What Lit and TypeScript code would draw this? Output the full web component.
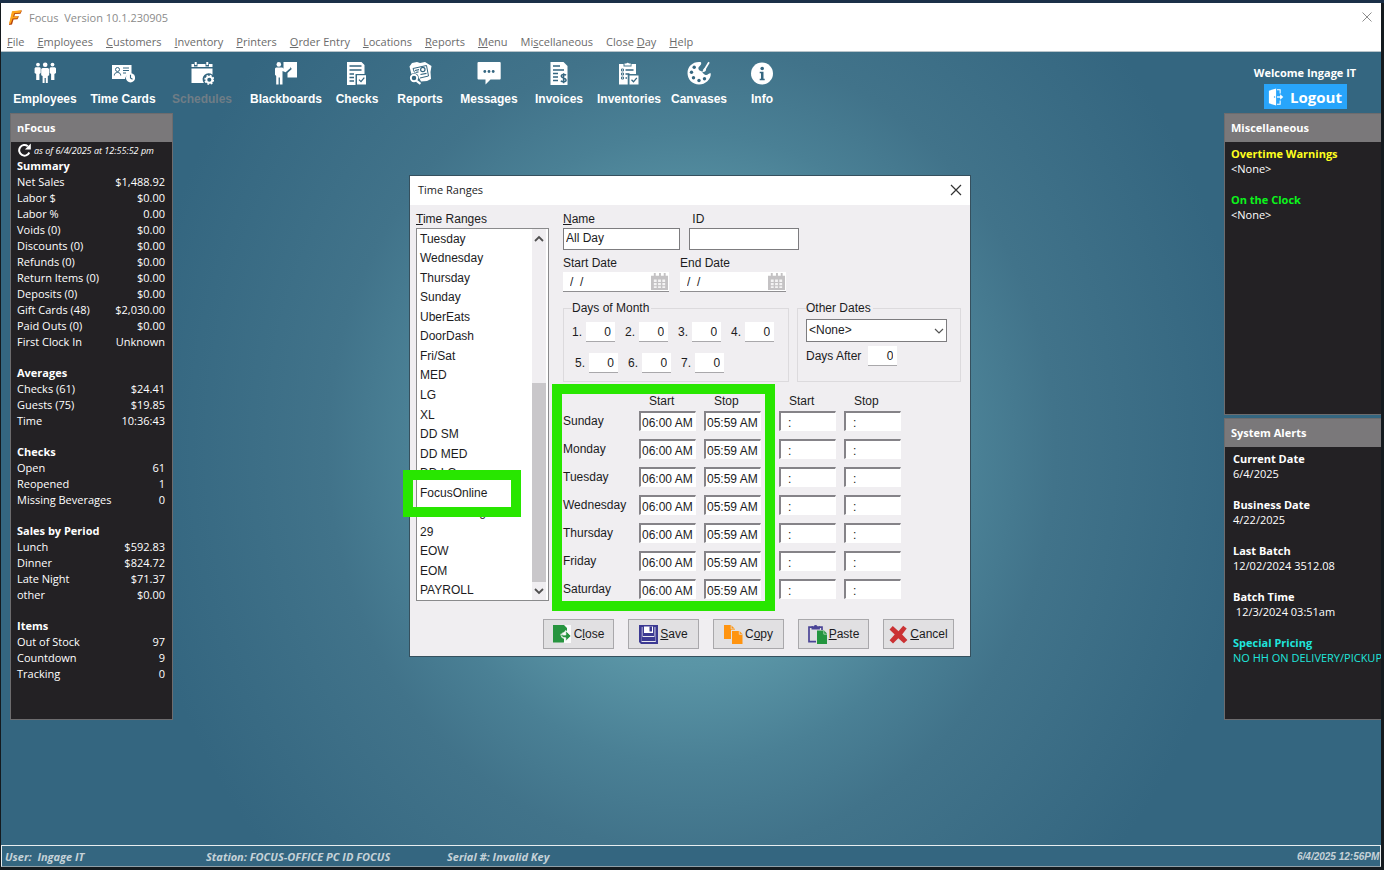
import { LitElement, html, css, svg, nothing } from "lit";
import type { TemplateResult, SVGTemplateResult } from "lit";
import { customElement } from "lit/decorators.js";
import { classMap } from "lit/directives/class-map.js";

/** Menu captions; "&" precedes the access key. */
const MENUS = [
  "&File", "&Employees", "&Customers", "&Inventory", "&Printers", "&Order Entry",
  "&Locations", "&Reports", "&Menu", "Mi&scellaneous", "Close &Day", "&Help",
];

const accessKey = (caption: string): TemplateResult => {
  const i = caption.indexOf("&");
  if (i < 0) return html`${caption}`;
  return html`${caption.slice(0, i)}<u>${caption[i + 1]}</u>${caption.slice(i + 2)}`;
};

const icon = (body: SVGTemplateResult, size = 24, box = 24): TemplateResult =>
  html`<svg width=${size} height=${size} viewBox="0 0 ${box} ${box}" aria-hidden="true">${body}</svg>`;

const BG = "#346680";

const TOOLS: { name: string; disabled?: boolean; art: SVGTemplateResult }[] = [
  {
    name: "Employees",
    art: svg`<g fill="#fff"><circle cx="5" cy="3.6" r="1.9"/><circle cx="19.500" cy="3.600" r="1.900"/><circle cx="12.200" cy="3.800" r="2.300"/>
      <path d="M2.500 6.300h4.200l1 .8V12l-1.300 1v6H3.200v-6L1.600 12V7.200zM17.700 6.300h4.200l1.100.9V12l-1.600 1v6h-3.300v-6L16.700 12V7.100z"/>
      <path d="M9.500 7h5.400l1.300 1.100v6.100L14.800 15v7h-2v-5h-1.200v5h-2v-7l-1.400-.8V8.100z"/></g>`,
  },
  {
    name: "Time Cards",
    art: svg`<path fill="#fff" d="M1 4h19.500v9.500a5 5 0 0 0-6.500 4.500H1z"/><circle cx="19.500" cy="16.800" r="4.600" fill="#fff"/>
      <path d="M19.500 13.800v3.200l2 1.200" fill="none" stroke=${BG} stroke-width="1.100"/>
      <circle cx="6.500" cy="8.500" r="2" fill="none" stroke=${BG}/><path d="M3.300 14.500c0-2 1.200-3 3.200-3s3.200 1 3.200 3M12 7h6M12 9.500h6M12 12h3" fill="none" stroke=${BG}/>`,
  },
  {
    name: "Schedules",
    disabled: true,
    art: svg`<path fill="#fff" d="M1.500 3H4v2.500h3.500V3h8v2.500H19V3h3.500v3h-21zM1.500 7.500h21v6.200a6 6 0 0 0-8.600 8.300H1.500z"/>
      <path d="M5.700 1v3M17.300 1v3" stroke="#fff" stroke-width="2"/>
      <circle cx="19.300" cy="18.800" r="3" fill="none" stroke="#fff" stroke-width="1.900"/><circle cx="19.300" cy="18.800" r="4.300" fill="none" stroke="#fff" stroke-width="1.500" stroke-dasharray="1.700 1.680"/>`,
  },
  {
    name: "Blackboards",
    art: svg`<path fill="#fff" d="M9.500 1H23v15.500h-9.500V12l4.300-4-1.200-1.700-5 3.400H9.500z"/><circle cx="4.800" cy="3.400" r="2.300" fill="#fff"/>
      <path d="M2 6.600h6.200L11.500 8.800l4-3 1 1.300-4.900 4.200L8.500 10v13.500H5.900v-7H4.600v7H2.200V15L1 13.700V7.600z" fill="#fff"/>`,
  },
  {
    name: "Checks",
    art: svg`<path fill="#fff" d="M2 1h14.500L19.500 4v9H10.500v11H2z"/><path fill="#fff" d="M12 14.200h9v9.300h-9z"/>
      <path d="M4.500 5h12M4.500 9h12M4.500 13h4.500M4.500 16.500h4.500M4.500 20h4.500" stroke=${BG} stroke-width="1.500"/><path d="M14 18.600l2 2 3.300-4" fill="none" stroke=${BG} stroke-width="1.300"/>`,
  },
  {
    name: "Reports",
    art: svg`<path fill="#fff" d="M1.500 5.500 4 2l5-1 3 1 5-1L23.500 5l-1 6 .5 7-4 2-6 .5-1.500-3-7.500-2z"/><path fill="none" stroke=${BG} d="M5 7.500 18.500 4.500l2 10.500-8.500 2M5 7.500l1.500 4"/>
      <path d="M7 9.500l4-.8M7.500 11.500l3-.6M12.500 13.500l6-1.200" stroke=${BG} stroke-width="1.200"/><circle cx="14.800" cy="8.500" r="2.200" fill="none" stroke=${BG} stroke-width="1.200"/>
      <circle cx="6" cy="17" r="4.800" fill=${BG}/><circle cx="6" cy="17" r="3.200" fill="none" stroke="#fff" stroke-width="1.900"/><path d="M8.500 19.800l4 3" stroke="#fff" stroke-width="2.200"/>`,
  },
  {
    name: "Messages",
    art: svg`<path fill="#fff" d="M1.500 1h21A1 1 0 0 1 23.700 2v15.500a1 1 0 0 1-1.200 1H13.500L8.500 23.500v-5h-7a1 1 0 0 1-1-1V2a1 1 0 0 1 1-1z"/>
      <g fill=${BG}><circle cx="7.800" cy="10.500" r="1.400"/><circle cx="12" cy="10.500" r="1.400"/><circle cx="16.200" cy="10.500" r="1.400"/></g>`,
  },
  {
    name: "Invoices",
    art: svg`<path fill="#fff" d="M3.500 1h13l4 4v19h-17z"/><path d="M6 5h7M6 9h11M6 12.500h5M6 16h5M6 19.500h5" stroke=${BG} stroke-width="1.600"/>
      <path d="M19 14.300c-1-1.200-4.800-1.200-4.800.8 0 2.300 4.900 1.500 4.900 4 0 2.200-4 2.200-5.200.7M16.600 12.200v10" fill="none" stroke=${BG} stroke-width="1.500"/>`,
  },
  {
    name: "Inventories",
    art: svg`<path fill="#fff" d="M2 3h4.500v2.500h8V3H19v10h-8.300v10.500H2z"/><path fill="#fff" d="M7.500 2.500h1.800a1.500 1.500 0 0 1 2.700 0h1.700v2H7.500z"/><path fill="#fff" d="M12.500 14.500h9v9h-9z"/>
      <path d="M8.500 9h8M8.500 13h4M8.500 17h1.500" stroke=${BG} stroke-width="1.400"/><path d="M4.500 8h2v2h-2zM4.500 12h2v2h-2zM4.500 16h2v2h-2z" fill="none" stroke=${BG} stroke-width=".9"/><path d="M14.500 18.800l2 2 3.300-4" fill="none" stroke=${BG} stroke-width="1.300"/>`,
  },
  {
    name: "Canvases",
    art: svg`<path fill="#fff" d="M14 1.200C6 .2.500 5.500.500 12c0 6.500 5 11.500 11.500 11.500S24 18.500 23.800 12.500c-1.600-1-2.800 2-5.300 1.400-2.600-.6-2.700-3.300-4.700-3.900-2-.6-2.800-2.200-2.300-3.600.6-1.600 3.500-2.200 2.500-5.200z"/>
      <g fill=${BG}><circle cx="7.200" cy="6.200" r="1.700"/><circle cx="4.500" cy="11.300" r="1.700"/><circle cx="6.500" cy="16.700" r="1.700"/><circle cx="12" cy="19.500" r="1.700"/><circle cx="17.500" cy="17.800" r="1.700"/></g>
      <path d="M22 1.300l-4.800 8" stroke="#fff" stroke-width="1.700"/><path d="M17.800 7.200c-1.800 0-1.200 2.600-2.800 3.600 2 .8 4.300-.4 4-2.800z" fill="#fff"/>`,
  },
  {
    name: "Info",
    art: svg`<circle cx="12" cy="12.500" r="11" fill="#fff"/><circle cx="12.200" cy="7.500" r="1.800" fill=${BG}/><path d="M9.700 10.800h3.800v7h1.200v1.500h-5v-1.500h1.300v-5.500H9.700z" fill=${BG}/>`,
  },
];

const SUMMARY: { title: string; rows: [string, string][] }[] = [
  {
    title: "Summary",
    rows: [
      ["Net Sales", "$1,488.92"], ["Labor $", "$0.00"], ["Labor %", "0.00"], ["Voids (0)", "$0.00"],
      ["Discounts (0)", "$0.00"], ["Refunds (0)", "$0.00"], ["Return Items (0)", "$0.00"], ["Deposits (0)", "$0.00"],
      ["Gift Cards (48)", "$2,030.00"], ["Paid Outs (0)", "$0.00"], ["First Clock In", "Unknown"],
    ],
  },
  { title: "Averages", rows: [["Checks (61)", "$24.41"], ["Guests (75)", "$19.85"], ["Time", "10:36:43"]] },
  { title: "Checks", rows: [["Open", "61"], ["Reopened", "1"], ["Missing Beverages", "0"]] },
  { title: "Sales by Period", rows: [["Lunch", "$592.83"], ["Dinner", "$824.72"], ["Late Night", "$71.37"], ["other", "$0.00"]] },
  { title: "Items", rows: [["Out of Stock", "97"], ["Countdown", "9"], ["Tracking", "0"]] },
];

const ALERTS = [
  { title: "Current Date", value: "6/4/2025" },
  { title: "Business Date", value: "4/22/2025" },
  { title: "Last Batch", value: "12/02/2024 3512.08" },
  { title: "Batch Time", value: "\u00a012/3/2024 03:51am" },
  { title: "Special Pricing", value: "NO HH ON DELIVERY/PICKUP", tone: "cyan" },
];

const RANGES = [
  "Tuesday", "Wednesday", "Thursday", "Sunday", "UberEats", "DoorDash", "Fri/Sat", "MED", "LG", "XL",
  "DD SM", "DD MED", "DD LG", "FocusOnline", "DD Catering", "29", "EOW", "EOM", "PAYROLL",
];

const DAYS = ["Sunday", "Monday", "Tuesday", "Wednesday", "Thursday", "Friday", "Saturday"];

const ACTIONS: { caption: string; art: SVGTemplateResult }[] = [
  {
    caption: "C&lose",
    art: svg`<path fill="#fafafa" d="M10 0h8v18h-8z"/><path fill="#27943f" d="M0 0h11l3 3v3l-1.500-.8-1.500 2c-4 0-4.300 6 0 6.500v3.800H0z"/><path fill="#27943f" stroke="#fafafa" stroke-width=".7" d="M12.800 5.800 18 11l-5.200 5v-3.200c-3 .2-5-1.600-5-3.800 1.200 1 3 1.300 5 1z"/>`,
  },
  {
    caption: "&Save",
    art: svg`<path fill="#3c3a93" d="M0 0h19v19H2L0 17z"/><path fill="#e8e8f0" d="M2.500 2H4v9h11V2h1.800v15H2.500z"/><path fill="#fff" d="M5 1.500h9v6.500H5z"/><path fill="#3c3a93" d="M10.500 1.500H13v5h-2.500zM3.500 2v10h12V2h1v14h-14V2z"/>`,
  },
  {
    caption: "C&opy",
    art: svg`<path fill="#ff9410" d="M0 0h7l4 4v1H7v9H0zM8 6h7.500L18.500 9v10H8z"/><path d="M7.200 0v4H11M15.300 6v3.300h3.200" stroke="#e1e0e1" fill="none" stroke-width=".8"/>`,
  },
  {
    caption: "&Paste",
    art: svg`<path fill="none" stroke="#4a4496" stroke-width="1.700" d="M5 2.200H1v14.500h7M11 2.200h3V5"/><path fill="#4a4496" d="M3.500 1.200h2.300a2 2 0 0 1 3.600 0h2.500v3.200H3.500z"/><path fill="#24963f" d="M9 5.500h7L19.500 9v10H9z"/><path d="M15.800 5.500V9.200h3.700" stroke="#b8dcc0" fill="none" stroke-width=".8"/>`,
  },
  {
    caption: "&Cancel",
    art: svg`<path fill="#cb3234" d="M3.800 1 9.500 6.200 14.200.8l3.500 2.600-4.600 6 5.300 5.700-3.500 3.200-5.600-5L4 18.500.6 15.300l5.100-5.800L.5 4.500z"/>`,
  },
];

const calendar = icon(
  svg`<path fill="#c4c2c4" d="M0 3h3V0h2v3h3.500V0h2v3h3V0h2v3H18v15H0z"/>
    <path fill="#f4f3f4" d="M3 7h3v2.500H3zM7.500 7h3v2.500h-3zM12 7h3v2.500h-3zM3 10.500h3V13H3zM7.500 10.500h3V13h-3zM12 10.500h3V13h-3zM3 14h3v2H3zM7.500 14h3v2h-3zM12 14h3v2h-3z"/>`,
  17, 18,
);

@customElement("app-root")
export class AppRoot extends LitElement {
  static styles = css`
    :host {
      display: flex;
      flex-direction: column;
      min-height: 100vh;
      box-sizing: border-box;
      padding: 3px 3px 3px 1px;
      background: linear-gradient(#1b3048 0 3px, #141a1e 3px);
      font-family: "Open Sans", "Noto Sans", sans-serif;
      font-size: 11px;
      color: #fff;
      overflow: hidden;
    }
    * { box-sizing: border-box; }
    svg { display: block; flex: none; }
    button, input, select { font: inherit; color: inherit; margin: 0; padding: 0; border: 0; background: none; border-radius: 0; }
    ul { list-style: none; margin: 0; padding: 0; }

    .titlebar { display: flex; align-items: center; height: 28px; padding: 0 8px 0 7px; gap: 6px; background: #fff; color: #8b8b8b; font-size: 11px; }
    .titlebar .caption { flex: 1; white-space: pre; }
    .menubar { display: flex; height: 21px; padding: 0 6px; gap: 13px; align-items: center; background: #fff; color: #6b6b6b; border-bottom: 1px solid #b8c4ca; white-space: nowrap; }

    .desktop {
      flex: 1;
      display: flex;
      flex-direction: column;
      position: relative;
      background: radial-gradient(ellipse 560px 620px at 50% 50%, #6aabb9 0%, #5a95a6 35%, #4a8095 51%, #41738a 65%, #346680 100%);
    }
    .toolbar { display: flex; justify-content: space-between; height: 61px; padding-left: 5px; }
    .tools { display: grid; grid-template-columns: 78px 78px 80px 88px 54px 72px 66px 74px 66px 74px 52px; }
    .tool { display: flex; flex-direction: column; align-items: center; gap: 7px; padding-top: 9px; font: bold 12px/14px "Liberation Sans", sans-serif; white-space: nowrap; }
    .tool.off { color: #6f7d86; }
    .session { display: flex; flex-direction: column; align-items: center; gap: 3px; width: 152px; padding-top: 13px; font-weight: bold; line-height: 16px; }
    .logout { display: flex; align-items: center; justify-content: center; gap: 4px; width: 83px; height: 25px; background: #28a5fb; font-size: 15px; font-weight: bold; }

    .columns { display: flex; justify-content: space-between; align-items: stretch; padding-left: 9px; }
    .panel { border: 1px solid #6d6c6e; background: #232124; min-width: 0; overflow: hidden; }
    .panel h2 { margin: 0; padding: 0 6px; height: 28px; line-height: 28px; font-size: 11px; background: #7a787a; }
    .nfocus { width: 163px; }
    .nfocus .body { padding: 0 7px 37px 6px; }
    .stamp { display: flex; align-items: center; gap: 3px; height: 16px; font-size: 9px; font-style: italic; white-space: nowrap; }
    .groups { display: flex; flex-direction: column; gap: 15px; line-height: 16px; }
    .group h3 { margin: 0; font-size: 11px; line-height: 16px; }
    .line { display: flex; justify-content: space-between; white-space: nowrap; }
    .side { display: grid; grid-template-rows: 1fr 1fr; gap: 3px; width: 157px; }
    .side .panel { border-right: 0; }
    .notes { display: flex; flex-direction: column; gap: 16px; padding: 4px 6px; line-height: 15px; white-space: nowrap; }
    .notes.inset { padding-left: 8px; }
    .notes h3 { margin: 0; font-size: 11px; line-height: 15px; }
    .yellow { color: #ffff1e; }
    .green { color: #0cf41c; }
    .cyan { color: #1fe5dd; }

    .statusbar { display: flex; height: 22px; align-items: center; border: 1px solid #e8eef0; border-bottom-color: #8fa0a8; background: #346680; color: #c5d2d8; font-size: 11px; font-weight: bold; font-style: italic; white-space: pre; overflow: hidden; }
    .statusbar .user { width: 204px; padding-left: 3px; }
    .statusbar .station { width: 241px; }
    .statusbar .serial { flex: 1; }
    .statusbar .clock { width: 83px; font-family: "Liberation Sans", sans-serif; font-size: 10px; }

    .dialog { position: absolute; left: 50%; top: 123px; width: 562px; margin-left: -282px; border: 1px solid #35505e; background: #f0eef1; color: #1c1c1e; font: 12px/14px "Liberation Sans", Arial, sans-serif; }
    .dialog header { display: flex; align-items: center; justify-content: space-between; height: 29px; padding: 0 8px 2px; background: #fff; font: 11px/16px "Open Sans", sans-serif; }
    .dialog .main { display: grid; grid-template-columns: 133px 1fr; gap: 14px; padding: 7px 9px 0 6px; }
    .ranges { display: flex; flex-direction: column; gap: 2px; }
    .listbox { flex: 1; display: grid; grid-template-columns: 1fr 14px; border: 1px solid #8a8a8c; background: #fff; }
    .list { display: flex; flex-direction: column; padding-left: 3px; }
    .list li { flex: 1; display: flex; align-items: center; position: relative; }
    .mark { position: absolute; border: 10px solid #28e600; pointer-events: none; z-index: 2; }
    .mark.row { left: -17px; top: -13px; width: 118px; height: 47px; }
    .mark.hours { left: -11px; top: 2px; width: 223px; height: 227px; }
    .listbox { padding-right: 2px; }
    .scroll { display: grid; grid-template-rows: 19px 135px 1fr 18px; background: #f0eef1; }
    .scroll button { display: flex; align-items: center; justify-content: center; }
    .thumb { grid-row: 3; background: #c9c7ca; }
    .scroll .down { grid-row: 4; }

    .form { display: flex; flex-direction: column; }
    .pair { display: flex; }
    .field { display: flex; flex-direction: column; gap: 2px; }
    .text { height: 22px; padding: 0 2px 2px; border: 1px solid #7d7c7f; background: #fff; }
    .name { width: 117px; }
    .ident { width: 110px; }
    .gap9 { gap: 9px; }
    .dates { gap: 11px; padding-top: 6px; }
    .date { display: flex; align-items: center; width: 106px; height: 20px; padding-right: 1px; background: #fff; border-bottom: 1px solid #8f8e91; }
    .date input { flex: 1; min-width: 0; padding-left: 7px; }
    .boxes { display: flex; gap: 8px; padding-top: 9px; }
    fieldset { position: relative; margin: 0; min-width: 0; height: 81px; padding: 0 8px; border: 1px solid #dcdadd; }
    legend { padding: 0 2px 0 0; margin-left: 0; line-height: 14px; }
    .month { width: 226px; }
    .other { width: 164px; }
    .slots { display: flex; gap: 10px; padding-top: 7px; }
    .slots + .slots { padding: 11px 0 0 3px; }
    .slot { display: flex; align-items: center; gap: 4px; }
    .num { width: 29px; height: 20px; padding-right: 4px; background: #fff; border-bottom: 1px solid #a9a8ab; text-align: right; }
    .drop { position: relative; display: flex; }
    .drop select { width: 141px; height: 23px; padding: 0 0 2px 2px; border: 1px solid #7d7c7f; background: #fff; appearance: none; }
    .drop svg { position: absolute; right: 8px; top: 11px; pointer-events: none; }
    .other .drop { padding-top: 4px; }
    .after { display: flex; align-items: center; gap: 7px; padding-top: 4px; }

    .hours-wrap { position: relative; padding-top: 12px; }
    .table { border-collapse: collapse; table-layout: fixed; width: 338px; }
    .table th { padding: 0; font-weight: normal; text-align: left; vertical-align: top; }
    .table thead th { height: 17px; padding-left: 10px; }
    .table tbody th { padding-top: 3px; }
    .table td { padding: 0; vertical-align: top; }
    .table tbody td { height: 28px; }
    .table tbody tr:last-child td { height: 22px; }
    .table .day { width: 76px; }
    .table .near { width: 65px; }
    .table .far { width: 75px; }
    .table .last { width: 57px; }
    .table input { display: block; width: 57px; height: 20px; padding: 2px 0 0 1px; background: #fff; border: 1px solid #fff; border-top: 2px solid #858388; border-left: 2px solid #858388; }
    .table input.blank { padding-left: 7px; }
    .actions { display: flex; justify-content: flex-end; gap: 14px; padding: 18px 16px 7px; }
    .actions button { display: flex; align-items: center; justify-content: center; gap: 2px; width: 71px; height: 30px; border: 1px solid #a9a8ab; background: #e1e0e2; }
  `;

  private entry(label: string, value: string, blank = false) {
    return html`<input class=${blank ? "blank" : ""} type="text" aria-label=${label} .value=${value} />`;
  }

  private monthDay(n: number) {
    return html`<label class="slot">${n}.<input class="num" type="text" .value=${"0"} /></label>`;
  }

  private dialog() {
    return html`<section class="dialog" role="dialog" aria-label="Time Ranges">
      <header>
        <span>Time Ranges</span>
        <button aria-label="Close window">${icon(svg`<path d="M1 1l10 10M11 1 1 11" stroke="#333" stroke-width="1.200"/>`, 12, 12)}</button>
      </header>
      <div class="main">
        <div class="ranges">
          <span id="ranges">${accessKey("&Time Ranges")}</span>
          <div class="listbox">
            <ul class="list" role="listbox" aria-labelledby="ranges">
              ${RANGES.map((r) => html`<li role="option">${r}${r === "FocusOnline" ? html`<span class="mark row"></span>` : nothing}</li>`)}
            </ul>
            <div class="scroll">
              <button aria-label="Scroll up">${icon(svg`<path d="M1 7l4-4 4 4" fill="none" stroke="#505050" stroke-width="1.800"/>`, 10, 10)}</button>
              <div class="thumb"></div>
              <button class="down" aria-label="Scroll down">${icon(svg`<path d="M1 3l4 4 4-4" fill="none" stroke="#505050" stroke-width="1.800"/>`, 10, 10)}</button>
            </div>
          </div>
        </div>
        <div class="form">
          <div class="pair gap9">
            <div class="field"><label for="name">${accessKey("&Name")}</label><input id="name" class="text name" type="text" .value=${"All Day"} /></div>
            <div class="field"><label for="ident">&nbsp;ID</label><input id="ident" class="text ident" type="text" /></div>
          </div>
          <div class="pair dates">
            ${["Start Date", "End Date"].map(
              (d) => html`<label class="field">${d}<span class="date"><input type="text" .value=${"/\u00a0 /"} />${calendar}</span></label>`,
            )}
          </div>
          <div class="boxes">
            <fieldset class="month">
              <legend>Days of Month</legend>
              <div class="slots">${[1, 2, 3, 4].map((n) => this.monthDay(n))}</div>
              <div class="slots">${[5, 6, 7].map((n) => this.monthDay(n))}</div>
            </fieldset>
            <fieldset class="other">
              <legend>Other Dates</legend>
              <div class="drop">
                <select aria-label="Other Dates"><option>&lt;None&gt;</option></select>
                ${icon(svg`<path d="M1 3l4 4 4-4" fill="none" stroke="#555" stroke-width="1.200"/>`, 10, 10)}
              </div>
              <label class="after">Days After<input class="num" type="text" .value=${"0"} /></label>
            </fieldset>
          </div>
          <div class="hours-wrap">
            <table class="table">
              <thead>
                <tr><td class="day"></td><th class="near">Start</th><th class="far">Stop</th><th class="near">Start</th><th class="last">Stop</th></tr>
              </thead>
              <tbody>
                ${DAYS.map(
                  (d) => html`<tr>
                    <th scope="row">${d}</th>
                    <td>${this.entry(`${d} start`, "06:00 AM")}</td>
                    <td>${this.entry(`${d} stop`, "05:59 AM")}</td>
                    <td>${this.entry(`${d} second start`, ":", true)}</td>
                    <td>${this.entry(`${d} second stop`, ":", true)}</td>
                  </tr>`,
                )}
              </tbody>
            </table>
            <span class="mark hours"></span>
          </div>
        </div>
      </div>
      <div class="actions">${ACTIONS.map((a) => html`<button>${icon(a.art, 19, 19)}<span>${accessKey(a.caption)}</span></button>`)}</div>
    </section>`;
  }

  render() {
    return html`
      <div class="titlebar">
        ${icon(svg`<path d="M4.500 1.500 14 .5l-1.500 3.200-5.500.3-.7 2.500 4.700-.3-1.500 3-4 .3L4 14.500 1 15z" fill="#b4420c"/><path d="M4 1.300 13.500.3 12.300 2.800 6.200 3.200 5.200 6.700l5-.4-1 1.900-4.600.4L2.800 13.600 1 14z" fill="#ffa51c"/>`, 15, 15)}
        <span class="caption">Focus  Version 10.1.230905</span>
        <button aria-label="Close application">${icon(svg`<path d="M1.500 1.500l9 9M10.500 1.500l-9 9" stroke="#8d8d8d"/>`, 12, 12)}</button>
      </div>
      <nav class="menubar">${MENUS.map((m) => html`<button>${accessKey(m)}</button>`)}</nav>
      <main class="desktop">
        <div class="toolbar">
          <div class="tools">
            ${TOOLS.map((t) => html`<button class=${classMap({ tool: true, off: !!t.disabled })}>${icon(t.art)}<span>${t.name}</span></button>`)}
          </div>
          <div class="session">
            <span>Welcome Ingage IT</span>
            <button class="logout">
              ${icon(svg`<path fill="#fff" d="M1 3 9 .5v19L1 17z"/><path d="M10 2h3.500v4M10 18h3.500v-4" fill="none" stroke="#fff" stroke-width="1.200"/><path d="M10 10h5" stroke="#fff" stroke-width="1.500"/><path fill="#fff" d="M13.500 7 17 10l-3.500 3z"/><circle cx="7.300" cy="10" r=".8" fill="#28a5fb"/>`, 18, 20)}
              <span>Logout</span>
            </button>
          </div>
        </div>
        <div class="columns">
          <section class="panel nfocus">
            <h2>nFocus</h2>
            <div class="body">
              <div class="stamp">
                ${icon(svg`<path d="M12.300 9.500A5.300 5.300 0 1 1 10.800 3.200" fill="none" stroke="#fff" stroke-width="2"/><path fill="#fff" d="M13.800.5v6H7.900z"/>`, 14, 14)}
                <span>as of 6/4/2025 at 12:55:52 pm</span>
              </div>
              <div class="groups">
                ${SUMMARY.map(
                  (g) => html`<div class="group"><h3>${g.title}</h3>${g.rows.map(([k, v]) => html`<div class="line"><span>${k}</span><span>${v}</span></div>`)}</div>`,
                )}
              </div>
            </div>
          </section>
          <div class="side">
            <section class="panel">
              <h2>Miscellaneous</h2>
              <div class="notes">
                <div><h3 class="yellow">Overtime Warnings</h3>&lt;None&gt;</div>
                <div><h3 class="green">On the Clock</h3>&lt;None&gt;</div>
              </div>
            </section>
            <section class="panel">
              <h2>System Alerts</h2>
              <div class="notes inset">${ALERTS.map((a) => html`<div class=${a.tone ?? ""}><h3>${a.title}</h3>${a.value}</div>`)}</div>
            </section>
          </div>
        </div>
        ${this.dialog()}
      </main>
      <footer class="statusbar">
        <span class="user">User:  Ingage IT</span>
        <span class="station">Station: FOCUS-OFFICE PC ID FOCUS</span>
        <span class="serial">Serial #: Invalid Key</span>
        <span class="clock">6/4/2025 12:56PM</span>
      </footer>
    `;
  }
}
